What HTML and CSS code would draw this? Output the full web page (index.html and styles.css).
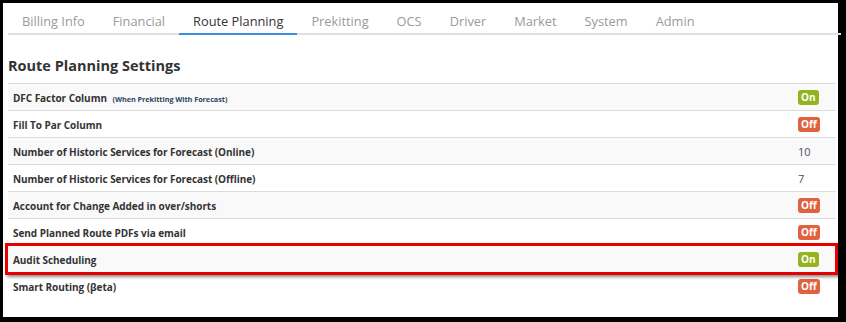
FILE: index.html
```html
<!DOCTYPE html>
<html>
<head>
<meta charset="utf-8">
<link rel="stylesheet" href="styles.css">
</head>
<body>
<div class="frame">
  <nav class="tabs">
    <a class="tab">Billing Info</a>
    <a class="tab">Financial</a>
    <a class="tab active">Route Planning</a>
    <a class="tab">Prekitting</a>
    <a class="tab">OCS</a>
    <a class="tab">Driver</a>
    <a class="tab">Market</a>
    <a class="tab">System</a>
    <a class="tab">Admin</a>
  </nav>
  <h2 class="title">Route Planning Settings</h2>
  <div class="table">
    <div class="row"><span class="label">DFC Factor Column <small class="note">(When Prekitting With Forecast)</small></span><span class="val"><span class="badge on">On</span></span></div>
    <div class="row"><span class="label">Fill To Par Column</span><span class="val"><span class="badge off">Off</span></span></div>
    <div class="row"><span class="label">Number of Historic Services for Forecast (Online)</span><span class="val num">10</span></div>
    <div class="row"><span class="label">Number of Historic Services for Forecast (Offline)</span><span class="val num">7</span></div>
    <div class="row"><span class="label">Account for Change Added in over/shorts</span><span class="val"><span class="badge off">Off</span></span></div>
    <div class="row"><span class="label">Send Planned Route PDFs via email</span><span class="val"><span class="badge off">Off</span></span></div>
    <div class="row"><span class="label">Audit Scheduling</span><span class="val"><span class="badge on">On</span></span></div>
    <div class="row"><span class="label">Smart Routing (βeta)</span><span class="val"><span class="badge off">Off</span></span></div>
  </div>
  <div class="highlight"></div>
</div>
</body>
</html>
```
FILE: styles.css
```css
html, body {
  margin: 0;
  padding: 0;
  background: #000;
}
body {
  width: 846px;
  height: 322px;
  overflow: hidden;
  font-family: "Open Sans", "Liberation Sans", sans-serif;
}
.frame {
  position: relative;
  margin: 3px 8px 0 3px;
  height: 314px;
  background: #fff;
  padding: 0 0 0 5px;
  box-sizing: border-box;
}
.tabs {
  display: flex;
  height: 30px;
  border-bottom: 2px solid #e0e0e0;
  margin-right: -3px;
  box-sizing: content-box;
}
.tab {
  padding: 6px 14px 0;
  font-size: 12.8px;
  line-height: 24px;
  color: #9a9a9a;
}
.tab.active {
  color: #333;
  border-bottom: 2px solid #3b8fe0;
  margin-bottom: -2px;
}
.title {
  margin: 0;
  height: 48px;
  line-height: 62px;
  font-size: 14.5px;
  font-weight: 700;
  color: #333;
}
.table {
  margin-right: 2px;
}
.row {
  display: flex;
  align-items: center;
  box-sizing: border-box;
  height: 27px;
  border-top: 1px solid #dcdcdc;
  padding-left: 5px;
  padding-top: 1px;
}
.row:nth-child(odd) {
  background: #f9f9f9;
}
.label {
  flex: 1;
  font-size: 10px;
  font-weight: 700;
  color: #333;
  letter-spacing: -0.05px;
}
.note {
  font-size: 7.3px;
  font-weight: 700;
  color: #2d4766;
  margin-left: 3px;
}
.val {
  width: 38px;
  font-size: 10px;
}
.num {
  color: #4a4f63;
  font-weight: 400;
  font-size: 11px;
}
.badge {
  display: inline-block;
  height: 15px;
  line-height: 15px;
  padding: 0 3px;
  border-radius: 3px;
  color: #fff;
  font-weight: 700;
  font-size: 10px;
}
.badge.on {
  background: #93b41c;
}
.badge.off {
  background: #e0623f;
}
.highlight {
  position: absolute;
  left: 2px;
  top: 240px;
  width: 833px;
  height: 32px;
  border: 3px solid #e60000;
  box-sizing: border-box;
  box-shadow: 2px 2px 3px rgba(0,0,0,0.45);
}
```
